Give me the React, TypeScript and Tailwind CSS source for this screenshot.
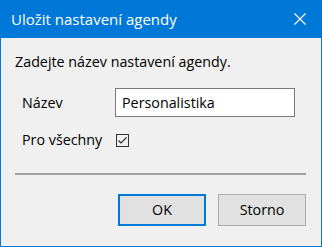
const App = () => {
  return (
    <div className="w-[322px] h-[247px] border border-[#0078d7] bg-[#f0f0f0] flex flex-col font-['Segoe_UI','Open_Sans',sans-serif] text-[14.3px] leading-[20px] text-black">
      <div className="h-[37px] shrink-0 bg-[#0078d7] flex items-center justify-between pl-[10px] pr-[15px] text-white text-[15px]">
        <span className="-mt-[1px]">Uložit nastavení agendy</span>
        <svg width="12" height="12" viewBox="0 0 12 12" className="-mt-[1px]">
          <path d="M0.5 0.5 L11.5 11.5 M11.5 0.5 L0.5 11.5" stroke="white" strokeWidth="1.2" />
        </svg>
      </div>
      <div className="flex flex-col pl-[14px] pr-[15px]">
        <div className="mt-[14px]">Zadejte název nastavení agendy.</div>
        <div className="mt-[16px] flex items-center">
          <span className="ml-[7px] w-[93px]">Název</span>
          <div className="w-[180px] h-[29px] border border-[#7a7a7a] bg-white flex items-center px-[6px]">
            Personalistika
          </div>
        </div>
        <div className="mt-[13px] flex items-center h-[20px]">
          <span className="ml-[7px] w-[94px]">Pro všechny</span>
          <div className="w-[13px] h-[13px] border border-[#333333] bg-[#f0f0f0] flex items-center justify-center">
            <svg width="11" height="11" viewBox="0 0 11 11">
              <path d="M1.5 5.5 L4 8 L9.5 2.5" fill="none" stroke="#333333" strokeWidth="1.2" />
            </svg>
          </div>
        </div>
        <div className="mt-[23px] h-[2px] bg-[#a0a0a0]" />
        <div className="mt-[19px] flex justify-end gap-[12px]">
          <button className="w-[88px] h-[32px] border-2 border-[#0078d7] bg-[#e1e1e1] flex items-center justify-center">
            OK
          </button>
          <button className="w-[88px] h-[32px] border border-[#adadad] bg-[#e1e1e1] flex items-center justify-center">
            Storno
          </button>
        </div>
      </div>
    </div>
  );
};

export default App;
